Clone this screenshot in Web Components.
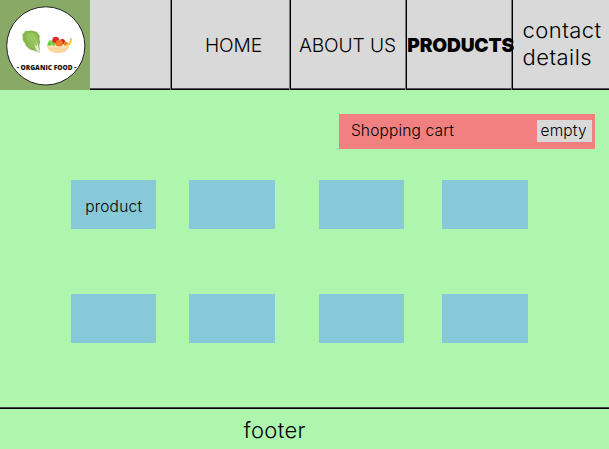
<!DOCTYPE html>
<html lang="en">
<head>
<meta charset="utf-8">
<title>Organic Food</title>
<style>
html,body{margin:0;height:100%}
body{background:#aef5ad;overflow:hidden;font-family:Inter,"Liberation Sans",sans-serif;font-weight:300;color:#000}
</style>
</head>
<body>
<shop-page></shop-page>
<script>
class Base extends HTMLElement{
  connectedCallback(){
    if(this.shadowRoot)return;
    this.attachShadow({mode:"open"}).innerHTML=this.constructor.markup;
  }
}
class BrandLogo extends Base{
  static markup=`<style>:host{display:block;width:90px;height:90px;background:#88aa66}svg{display:block}</style>
  <svg width="90" height="90" viewBox="0 0 90 90">
    <circle cx="45.8" cy="45.9" r="39.1" fill="#fff" stroke="#222" stroke-width="1"/>
    <path d="M22.800 36.500Q21.600 34.500 24 33Q24.800 30.200 28 30.900Q31.500 30 34.300 31.300Q37.500 31.300 38 33.800Q40.700 35.700 39.300 38.500Q40.800 42 39.300 45.500Q39.900 48 39.800 51.400Q39.200 53.700 37 52Q35.300 50.200 32.500 50.200Q29.300 50.400 27.500 47.300Q25.300 46.500 25.200 43.500Q22 40.500 22.800 36.500Z" fill="#86b64b"/>
    <path d="M26 34Q29 31.500 33 33Q37 34 37.500 38Q38.500 42 37.500 46Q34 44 31 45Q26 42 26 34Z" fill="#93c255"/>
    <path d="M29 35Q35 42 38.300 52M32 33Q36.500 40 38 50M28 45Q34 46 38 51" fill="none" stroke="#b3d485" stroke-width=".6"/>
    <path d="M34 44.500Q37 48 37.400 43L39.700 51.500Q39.400 53.500 37.300 52Z" fill="#dfe9c8"/>
    <circle cx="50.700" cy="42.900" r="2.700" fill="#78d94d"/><circle cx="49.200" cy="44.500" r="1.800" fill="#56c944"/>
    <circle cx="55.800" cy="40.200" r="3.500" fill="#d82c2d"/><circle cx="62.300" cy="41.700" r="2.700" fill="#bd292a"/>
    <circle cx="65.800" cy="43.700" r="2.200" fill="#e98032"/>
    <path d="M64 45.400Q69.500 44.500 70.500 39L71.600 38.700Q72.400 43.500 68.500 46Z" fill="#f4ca2c"/>
    <path d="M70.300 39.300L71.500 38.300" stroke="#765a22" stroke-width=".8"/>
    <circle cx="59.300" cy="43.400" r="3.700" fill="#f57928"/><circle cx="54" cy="44.300" r="1.800" fill="#8aca3a"/>
    <path d="M46.900 45.500Q58 47.500 69.300 45.400C69.100 49.700 64.500 53.100 58 53.100S47.200 49.800 46.900 45.500Z" fill="#f8d69e"/>
    <path d="M47.200 45.900Q58 48.300 69 45.900" fill="none" stroke="#ffe5b8" stroke-width="1.200"/>
    <text x="16.700" y="69.500" textLength="59.700" lengthAdjust="spacingAndGlyphs" font-family="Open Sans,sans-serif" font-weight="800" font-size="6.500" fill="#151515">- ORGANIC FOOD -</text>
  </svg>`;
}
class NavCell extends Base{
  static markup=`<style>
  :host{display:flex;box-sizing:border-box;height:90px;align-items:center;justify-content:center;white-space:nowrap;font-size:19.200px;letter-spacing:-.1px;padding-bottom:1px;
  background:linear-gradient(#000 0 0) right/1px 100% no-repeat,linear-gradient(#777 0 0) right 1px top/1px 100% no-repeat}
  :host([active]){font-weight:900;letter-spacing:-.2px;padding-left:.3px}
  :host([last]){background:none;justify-content:flex-start;white-space:normal;font-size:22px;letter-spacing:.45px;line-height:27px;padding-left:9.500px;padding-bottom:3px}
  span{display:block}
  </style><span><slot></slot></span>`;
}
class SiteHeader extends Base{
  static markup=`<style>
  :host{display:grid;grid-template-columns:90px 1fr;height:90px}
  nav{display:grid;grid-template-columns:82px 119px 116px 106px 1fr;background:linear-gradient(#000 0 0) left bottom/100% 1px no-repeat,linear-gradient(#555 0 0) left 0 bottom 1px/100% 1px no-repeat,#d9d9d9}
  </style><brand-logo></brand-logo><nav><nav-cell></nav-cell>
  <nav-cell style="padding-left:4px">HOME</nav-cell><nav-cell style="padding-right:3px">ABOUT US</nav-cell>
  <nav-cell active style="justify-content:flex-start">PRODUCTS</nav-cell><nav-cell last>contact details</nav-cell></nav>`;
}
class CartBar extends Base{
  static markup=`<style>
  :host{display:flex;box-sizing:border-box;width:256px;height:35px;margin:24px 0 0 339.400px;padding:0 3px 1px 11.500px;background:#f28080;align-items:center;justify-content:space-between;font-size:15.500px;letter-spacing:.16px}
  .label{padding-bottom:2px}
  .state{box-sizing:border-box;width:55.500px;height:22px;line-height:22px;text-align:center;background:#d9d9d9;padding-right:2px}
  </style><span class="label"><slot></slot></span><span class="state"><slot name="state"></slot></span>`;
}
class ProductTile extends Base{
  static markup=`<style>:host{display:flex;align-items:center;justify-content:center;background:#87c9d9;font-size:15.500px;letter-spacing:.22px;padding-top:3px;height:46px;width:85.400px}</style><slot></slot>`;
}
class ProductGrid extends Base{
  static markup=`<style>:host{display:grid;grid-template-columns:118.400px 129.600px 123.300px 85.500px;row-gap:65px;margin:31px 0 0 71px}</style>
  <product-tile>product</product-tile>`+"<product-tile></product-tile>".repeat(7);
}
class SiteFooter extends Base{
  static markup=`<style>:host{display:flex;box-sizing:border-box;height:42px;align-items:center;padding:3px 0 0 243.500px;font-size:22px;letter-spacing:.35px;
  background:linear-gradient(#444 0 0) top/100% 1px no-repeat,linear-gradient(#000 0 0) left top 1px/100% 1px no-repeat}</style><slot></slot>`;
}
class ShopPage extends Base{
  static markup=`<style>:host{display:flex;flex-direction:column;height:449px;width:609px}main{flex:1;display:flex;flex-direction:column}</style>
  <site-header></site-header><main><cart-bar>Shopping cart<span slot="state">empty</span></cart-bar><product-grid></product-grid></main><site-footer>footer</site-footer>`;
}
customElements.define("brand-logo",BrandLogo);
customElements.define("nav-cell",NavCell);
customElements.define("site-header",SiteHeader);
customElements.define("cart-bar",CartBar);
customElements.define("product-tile",ProductTile);
customElements.define("product-grid",ProductGrid);
customElements.define("site-footer",SiteFooter);
customElements.define("shop-page",ShopPage);
</script>
</body>
</html>
